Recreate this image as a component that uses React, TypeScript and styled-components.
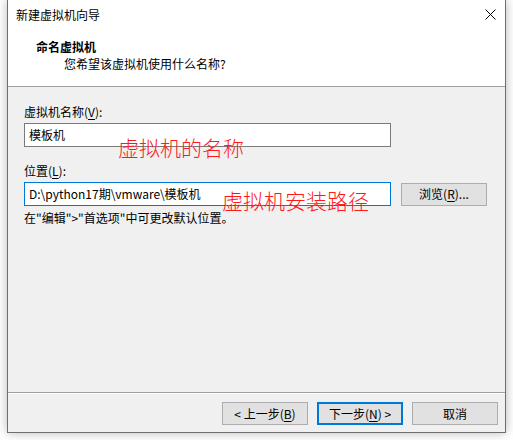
import React from "react";
import styled, { createGlobalStyle } from "styled-components";

const GlobalStyle = createGlobalStyle`
  html, body {
    margin: 0;
    padding: 0;
    background: #ffffff;
  }
  body {
    font-family: "Noto Sans CJK SC", "Noto Sans", sans-serif;
    font-size: 12px;
    color: #000;
  }
`;

const Page = styled.div`
  width: 513px;
  height: 440px;
  overflow: hidden;
`;

const Window = styled.div`
  position: relative;
  box-sizing: border-box;
  margin-left: 7px;
  width: 499px;
  height: 433px;
  border: 1px solid #6e6e6e;
  border-top: none;
  background: #f0f0f0;
  display: flex;
  flex-direction: column;
  box-shadow: 0 0 10px rgba(0, 0, 0, 0.28);
`;

const TitleBar = styled.div`
  height: 30px;
  background: #fff;
  display: flex;
  align-items: center;
  justify-content: space-between;
  padding: 0 9px 0 8px;
  line-height: 30px;
`;

const CloseIcon = styled.svg`
  width: 11px;
  height: 11px;
  margin-top: -1px;
`;

const Header = styled.div`
  height: 57px;
  box-sizing: border-box;
  background: #fff;
  border-bottom: 1px solid #a0a0a0;
  padding: 8px 0 0 28px;
`;

const HeaderTitle = styled.div`
  font-weight: 700;
  line-height: 17px;
`;

const HeaderSub = styled.div`
  line-height: 17px;
  padding-left: 28px;
`;

const Body = styled.div`
  flex: 1;
  padding: 16px 16px 0;
  display: flex;
  flex-direction: column;
`;

const Label = styled.div<{ $gap?: number }>`
  line-height: 17px;
  margin-top: ${(p) => p.$gap ?? 0}px;
  margin-bottom: 3px;
`;

const Key = styled.span`
  text-decoration: underline;
  text-underline-offset: 2px;
`;

const Field = styled.div<{ $focused?: boolean }>`
  box-sizing: border-box;
  width: 367px;
  height: 24px;
  background: #fff;
  border: 1px solid ${(p) => (p.$focused ? "#0078d7" : "#7a7a7a")};
  padding-left: 4px;
  line-height: 22px;
  white-space: nowrap;
`;

const Row = styled.div`
  display: flex;
  align-items: center;
  gap: 10px;
`;

const Button = styled.div<{ $primary?: boolean }>`
  box-sizing: border-box;
  width: 86px;
  height: 23px;
  background: #e1e1e1;
  border: ${(p) => (p.$primary ? "2px solid #0078d7" : "1px solid #adadad")};
  display: flex;
  align-items: center;
  justify-content: center;
  line-height: 1;
  white-space: nowrap;
`;

const Hint = styled.div`
  line-height: 17px;
  margin-top: 3px;
`;

const Footer = styled.div`
  height: 40px;
  box-sizing: border-box;
  border-top: 1px solid #a0a0a0;
  box-shadow: inset 0 1px 0 #fff;
  display: flex;
  justify-content: flex-end;
  align-items: flex-start;
  gap: 9px;
  padding: 9px 7px 0 0;
`;

const Note = styled.div<{ $x: number; $y: number }>`
  position: absolute;
  left: ${(p) => p.$x}px;
  top: ${(p) => p.$y}px;
  color: #ff1a1a;
  font-size: 21px;
  line-height: 22px;
  font-weight: 300;
  white-space: nowrap;
`;

export default function App() {
  return (
    <Page>
      <GlobalStyle />
      <Window>
        <TitleBar>
          <span>新建虚拟机向导</span>
          <CloseIcon viewBox="0 0 11 11">
            <path d="M0.5 0.5 L10.5 10.5 M10.5 0.5 L0.5 10.5" stroke="#000" strokeWidth="1" />
          </CloseIcon>
        </TitleBar>
        <Header>
          <HeaderTitle>命名虚拟机</HeaderTitle>
          <HeaderSub>您希望该虚拟机使用什么名称?</HeaderSub>
        </Header>
        <Body>
          <Label>
            虚拟机名称(<Key>V</Key>):
          </Label>
          <Field>模板机</Field>
          <Label $gap={15}>
            位置(<Key>L</Key>):
          </Label>
          <Row>
            <Field $focused>D:\python17期\vmware\模板机</Field>
            <Button>
              浏览(<Key>R</Key>)...
            </Button>
          </Row>
          <Hint>在"编辑"&gt;"首选项"中可更改默认位置。</Hint>
        </Body>
        <Footer>
          <Button>
            &lt; 上一步(<Key>B</Key>)
          </Button>
          <Button $primary>
            下一步(<Key>N</Key>) &gt;
          </Button>
          <Button>取消</Button>
        </Footer>
        <Note $x={110} $y={136}>虚拟机的名称</Note>
        <Note $x={214} $y={189}>虚拟机安装路径</Note>
      </Window>
    </Page>
  );
}
